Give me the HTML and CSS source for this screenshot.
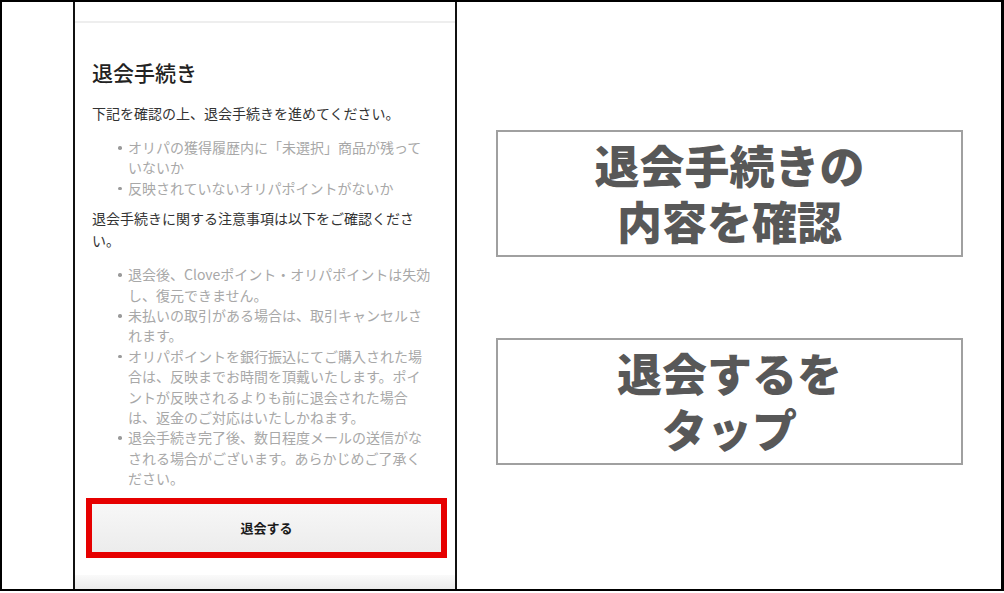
FILE: index.html
```html
<!DOCTYPE html>
<html lang="ja">
<head>
<meta charset="utf-8">
<title>退会手続き</title>
<link rel="stylesheet" href="styles.css">
</head>
<body>
<div class="frame">
  <div class="spacer"></div>
  <div class="phone">
    <div class="phone-header"></div>
    <div class="phone-body">
      <h1 class="title">退会手続き</h1>
      <p class="para">下記を確認の上、退会手続きを進めてください。</p>
      <ul class="notes">
        <li>オリパの獲得履歴内に「未選択」商品が残って<br>いないか</li>
        <li>反映されていないオリパポイントがないか</li>
      </ul>
      <p class="para">退会手続きに関する注意事項は以下をご確認くださ<br>い。</p>
      <ul class="notes">
        <li>退会後、Cloveポイント・オリパポイントは失効<br>し、復元できません。</li>
        <li>未払いの取引がある場合は、取引キャンセルさ<br>れます。</li>
        <li>オリパポイントを銀行振込にてご購入された場<br>合は、反映までお時間を頂戴いたします。ポイ<br>ントが反映されるよりも前に退会された場合<br>は、返金のご対応はいたしかねます。</li>
        <li>退会手続き完了後、数日程度メールの送信がな<br>される場合がございます。あらかじめご了承く<br>ださい。</li>
      </ul>
      <div class="highlight">
        <div class="btn">退会する</div>
      </div>
    </div>
    <div class="phone-footer"></div>
  </div>
  <div class="captions">
    <div class="caption">
      <span class="caption-line">退会手続きの</span>
      <span class="caption-line">内容を確認</span>
    </div>
    <div class="caption">
      <span class="caption-line">退会するを</span>
      <span class="caption-line">タップ</span>
    </div>
  </div>
</div>
</body>
</html>
```
FILE: styles.css
```css
* { box-sizing: border-box; }
html, body { margin: 0; padding: 0; background: #fff; }
body {
  font-family: "Noto Sans CJK JP", "Noto Sans", sans-serif;
  width: 1004px;
  height: 593px;
  overflow: hidden;
}
.frame {
  width: 1004px;
  height: 591px;
  border-top: 2px solid #000;
  border-left: 2px solid #000;
  border-right: 3px solid #000;
  border-bottom: 2px solid #000;
  display: flex;
}
.spacer { width: 71px; flex: none; }
.phone {
  width: 384px;
  flex: none;
  border-left: 2px solid #111;
  border-right: 2px solid #111;
  display: flex;
  flex-direction: column;
  background: #fff;
}
.phone-header {
  height: 21px;
  border-bottom: 2px solid #eeeeee;
  flex: none;
}
.phone-body {
  flex: 1;
  padding: 0 10px 0 17px;
}
.title {
  margin: 35px 0 0;
  font-size: 21px;
  line-height: 28px;
  font-weight: 500;
  color: #222;
}
.para {
  margin: 16px 0 0;
  font-size: 14px;
  line-height: 22px;
  color: #333;
  white-space: nowrap;
}
.notes {
  margin: 13px 0 0;
  padding: 0 0 0 36px;
  list-style: none;
  font-size: 14px;
  line-height: 20.4px;
  color: #a8a8a8;
  white-space: nowrap;
}
.notes + .para { margin-top: 9px; }
.notes li { position: relative; }
.notes li::before {
  content: "";
  position: absolute;
  left: -10px;
  top: 9px;
  width: 3.5px;
  height: 3.5px;
  border-radius: 50%;
  background: #9a9a9a;
}
.highlight {
  margin: 9px 0 0 -6px;
  width: 361px;
  height: 60px;
  border: 6px solid #e60000;
}
.btn {
  height: 100%;
  background: linear-gradient(180deg, #f7f7f7 0%, #ececec 100%);
  display: flex;
  align-items: center;
  justify-content: center;
  font-size: 13px;
  font-weight: 700;
  color: #1a1a1a;
}
.phone-footer {
  height: 14px;
  flex: none;
  background: linear-gradient(180deg, #fafafa 0%, #ebebeb 100%);
}
.captions {
  flex: 1;
  display: flex;
  flex-direction: column;
  padding: 128px 0 0 39px;
  gap: 81px;
}
.caption {
  width: 467px;
  height: 127px;
  border: 2px solid #a0a0a0;
  display: flex;
  flex-direction: column;
  align-items: center;
  justify-content: center;
  text-align: center;
  font-size: 45px;
  line-height: 56px;
  font-weight: 900;
  color: #585858;
  padding-bottom: 2px;
}
.caption-line {
  display: block;
  height: 56px;
}
```
